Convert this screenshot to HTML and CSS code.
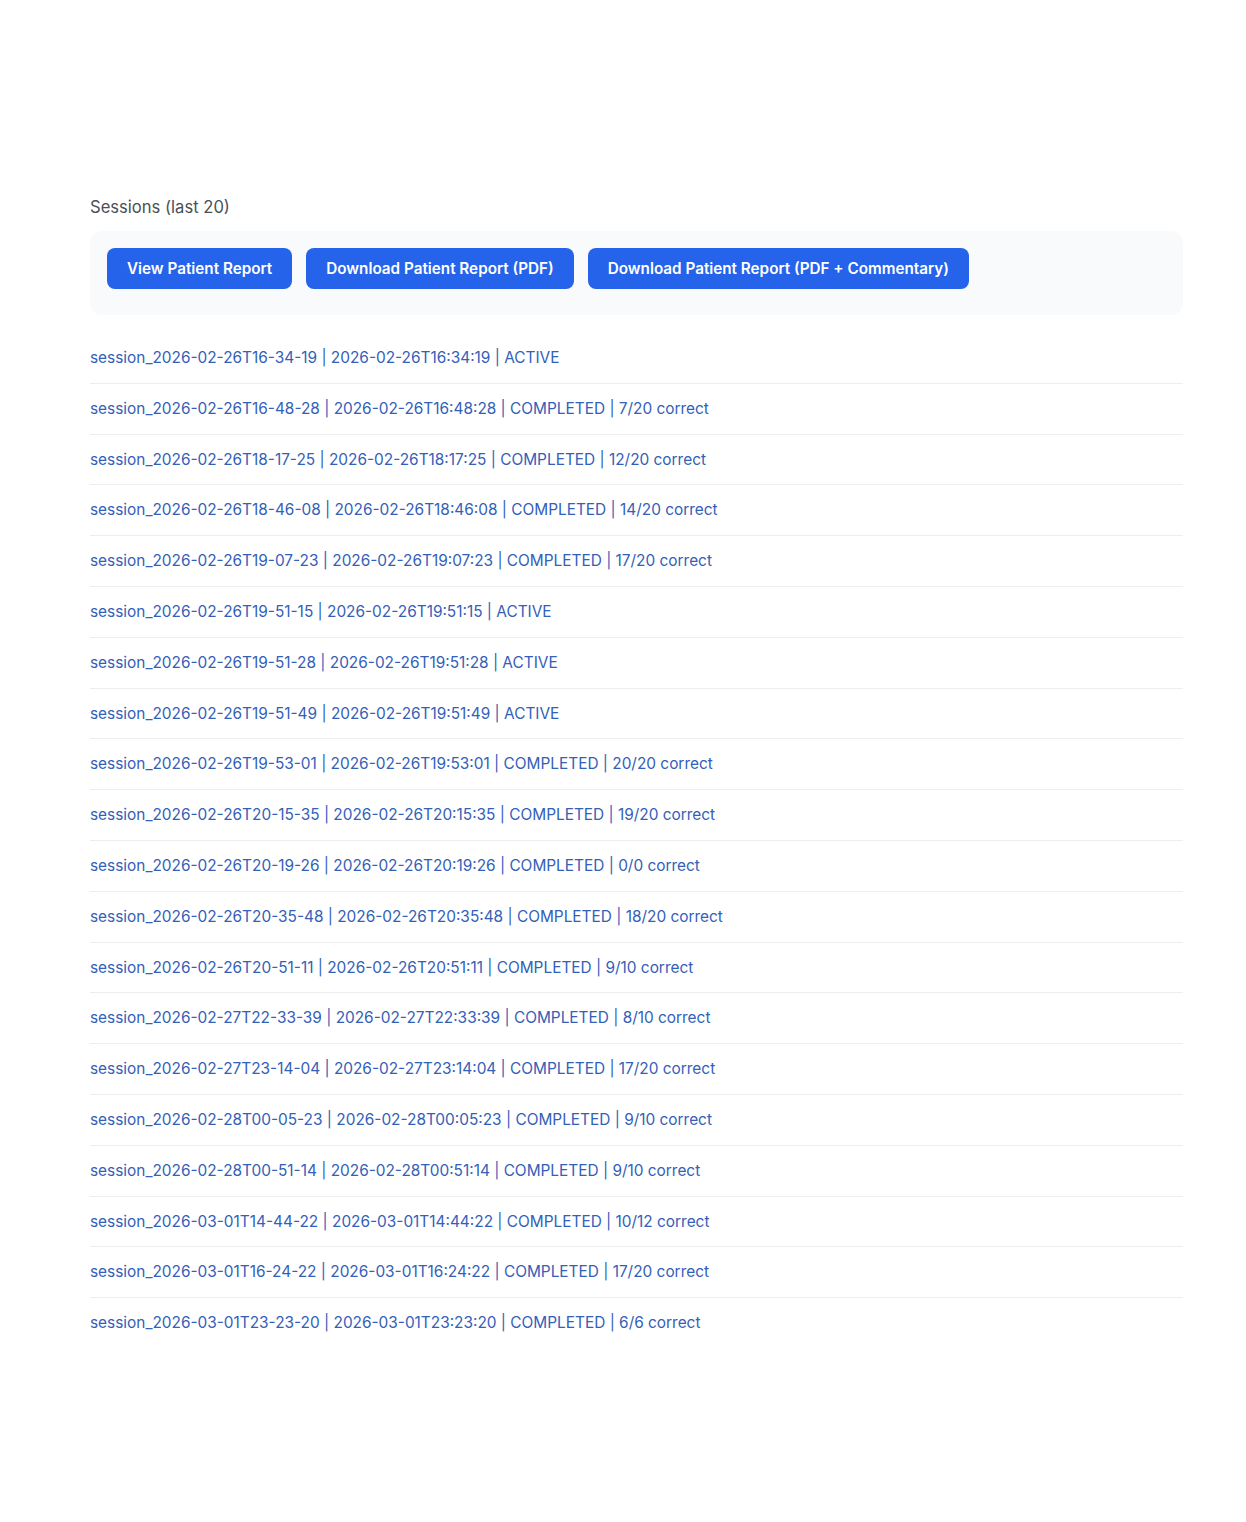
FILE: index.html
```html
<!DOCTYPE html>
<html>
  <head>
    <link rel="stylesheet" href="styles.css">
  </head>

  <body>
    <div class="page">
      <!-- sessions -->
      <h3 class="title">Sessions (last 20)</h3>

      <div class="actions">
        <button class="btn">View Patient Report</button>
        <button class="btn">Download Patient Report (PDF)</button>
        <button class="btn">Download Patient Report (PDF + Commentary)</button>
      </div>

      <ul class="sessions">
        <li><a href="#">session_2026-02-26T16-34-19 | 2026-02-26T16:34:19 | ACTIVE</a></li>
        <li><a href="#">session_2026-02-26T16-48-28 | 2026-02-26T16:48:28 | COMPLETED | 7/20 correct</a></li>
        <li><a href="#">session_2026-02-26T18-17-25 | 2026-02-26T18:17:25 | COMPLETED | 12/20 correct</a></li>
        <li><a href="#">session_2026-02-26T18-46-08 | 2026-02-26T18:46:08 | COMPLETED | 14/20 correct</a></li>
        <li><a href="#">session_2026-02-26T19-07-23 | 2026-02-26T19:07:23 | COMPLETED | 17/20 correct</a></li>
        <li><a href="#">session_2026-02-26T19-51-15 | 2026-02-26T19:51:15 | ACTIVE</a></li>
        <li><a href="#">session_2026-02-26T19-51-28 | 2026-02-26T19:51:28 | ACTIVE</a></li>
        <li><a href="#">session_2026-02-26T19-51-49 | 2026-02-26T19:51:49 | ACTIVE</a></li>
        <li><a href="#">session_2026-02-26T19-53-01 | 2026-02-26T19:53:01 | COMPLETED | 20/20 correct</a></li>
        <li><a href="#">session_2026-02-26T20-15-35 | 2026-02-26T20:15:35 | COMPLETED | 19/20 correct</a></li>
        <li><a href="#">session_2026-02-26T20-19-26 | 2026-02-26T20:19:26 | COMPLETED | 0/0 correct</a></li>
        <li><a href="#">session_2026-02-26T20-35-48 | 2026-02-26T20:35:48 | COMPLETED | 18/20 correct</a></li>
        <li><a href="#">session_2026-02-26T20-51-11 | 2026-02-26T20:51:11 | COMPLETED | 9/10 correct</a></li>
        <li><a href="#">session_2026-02-27T22-33-39 | 2026-02-27T22:33:39 | COMPLETED | 8/10 correct</a></li>
        <li><a href="#">session_2026-02-27T23-14-04 | 2026-02-27T23:14:04 | COMPLETED | 17/20 correct</a></li>
        <li><a href="#">session_2026-02-28T00-05-23 | 2026-02-28T00:05:23 | COMPLETED | 9/10 correct</a></li>
        <li><a href="#">session_2026-02-28T00-51-14 | 2026-02-28T00:51:14 | COMPLETED | 9/10 correct</a></li>
        <li><a href="#">session_2026-03-01T14-44-22 | 2026-03-01T14:44:22 | COMPLETED | 10/12 correct</a></li>
        <li><a href="#">session_2026-03-01T16-24-22 | 2026-03-01T16:24:22 | COMPLETED | 17/20 correct</a></li>
        <li><a href="#">session_2026-03-01T23-23-20 | 2026-03-01T23:23:20 | COMPLETED | 6/6 correct</a></li>
      </ul>
    </div>
  </body>
</html>
```

FILE: styles.css
```css
body {
  font-family: Inter, "Noto Sans", sans-serif;
  margin: 0;
  background: #ffffff;
}

.page {
  padding: 195px 63px 160px 90px;
}

.title {
  font-size: 16.6px;
  font-weight: 400;
  color: #4b5056;
  margin: 0 0 12px 0;
  line-height: 24px;
}

.actions {
  display: flex;
  gap: 14px;
  padding: 17px 17px 26px 17px;
  background: #f8fafc;
  border-radius: 12px;
}

.btn {
  font-family: inherit;
  font-size: 15.25px;
  font-weight: 600;
  color: #ffffff;
  background: #2563eb;
  border: none;
  border-radius: 8px;
  height: 41px;
  padding: 0 20px;
}

.sessions {
  list-style: none;
  margin: 18px 0 0 0;
  padding: 0;
}

.sessions li {
  padding: 14px 0;
  line-height: 21.8px;
  border-bottom: 1px solid #eceef1;
}

.sessions li:last-child {
  border-bottom: none;
}

.sessions a {
  font-size: 15.4px;
  color: #3360b8;
  text-decoration: none;
}
```
